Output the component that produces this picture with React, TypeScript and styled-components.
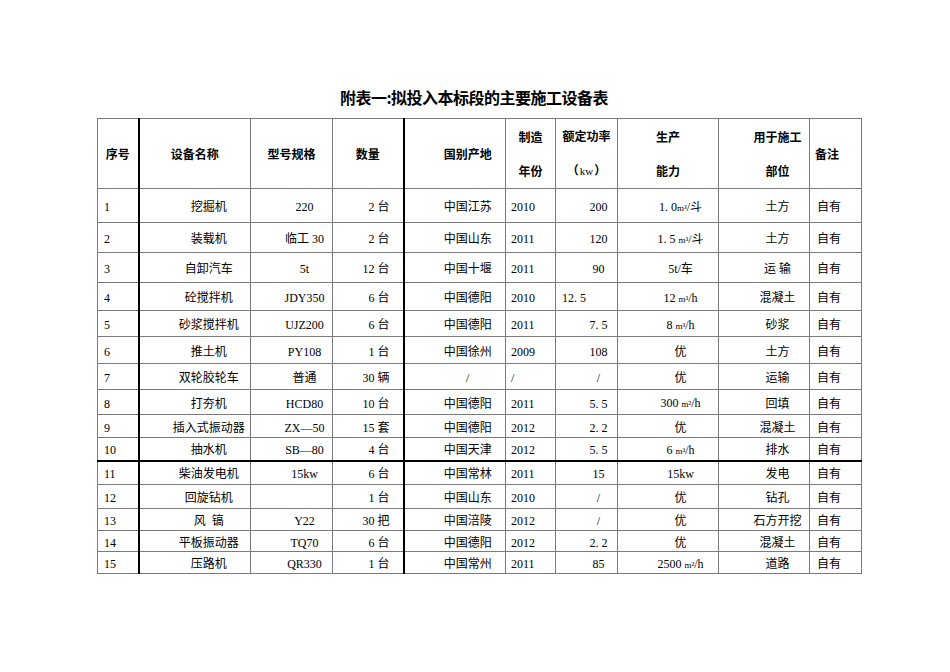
import React from "react";
import styled, { createGlobalStyle } from "styled-components";

const Global = createGlobalStyle`
  html, body { margin: 0; padding: 0; background: #ffffff; }
  body { font-family: "Noto Sans CJK SC", sans-serif; color: #000; }
`;

const Page = styled.main`
  width: 950px;
  height: 672px;
  box-sizing: border-box;
  padding: 86px 0 0 97px;
`;

const Title = styled.h1`
  width: 764px;
  box-sizing: border-box;
  margin: 0 0 10px;
  padding-right: 10px;
  font-family: "Noto Sans CJK SC", sans-serif;
  font-size: 16px;
  letter-spacing: -0.5px;
  line-height: 22px;
  font-weight: 700;
  text-align: center;
`;

const Table = styled.table`
  border-collapse: collapse;
  table-layout: fixed;
  width: 765px;
  font-size: 12px;
`;

const Col = styled.col<{ $w: number }>`
  width: ${(p) => p.$w}px;
`;

const HeadRow = styled.tr`
  height: 70px;
`;

const Row = styled.tr<{ $h: number; $heavy?: boolean }>`
  height: ${(p) => p.$h}px;
  ${(p) => (p.$heavy ? "& > td { border-bottom: 2px solid #000; }" : "")}
`;

type Align = "left" | "center" | "right";

const edge = (col: number) =>
  col === 1 || col === 4 ? "2px solid #000" : col === 8 ? "1px solid #333" : "1px solid #7a7a7a";

const HeadCell = styled.th<{ $col: number; $align: Align; $pl: number; $pr: number }>`
  border: 1px solid #7a7a7a;
  border-left: ${(p) => edge(p.$col)};
  padding: 0 ${(p) => p.$pr}px 0 ${(p) => p.$pl}px;
  text-align: ${(p) => p.$align};
  vertical-align: middle;
  font-family: "Noto Sans CJK SC", sans-serif;
  font-weight: 700;
  font-size: 12px;
  line-height: 16px;
  white-space: nowrap;
`;

const HeadLine = styled.div`
  line-height: 34px;
`;

const Kw = styled.span`
  font-family: "Liberation Serif", serif;
  font-weight: 400;
  font-size: 11px;
  margin: 0 1px;
`;

const Cell = styled.td<{ $col: number; $align: Align; $pl: number; $pr: number }>`
  border: 1px solid #7a7a7a;
  border-left: ${(p) => edge(p.$col)};
  padding: 3px ${(p) => p.$pr}px 0 ${(p) => p.$pl}px;
  text-align: ${(p) => p.$align};
  vertical-align: middle;
  font-family: "Liberation Serif", "Noto Sans CJK SC", serif;
  font-size: 12px;
  line-height: 16px;
  white-space: pre;
  overflow: hidden;
`;

const Unit = styled.span`
  font-size: 9px;
`;

const widths = [41, 112, 82, 71, 102, 50, 62, 101, 91, 52];

const colSpec: { align: Align; pl: number; pr: number }[] = [
  { align: "left", pl: 6, pr: 0 },
  { align: "center", pl: 28, pr: 0 },
  { align: "center", pl: 26, pr: 0 },
  { align: "right", pl: 0, pr: 13 },
  { align: "center", pl: 26, pr: 0 },
  { align: "left", pl: 5, pr: 0 },
  { align: "center", pl: 24, pr: 0 },
  { align: "center", pl: 25, pr: 0 },
  { align: "center", pl: 27, pr: 0 },
  { align: "left", pl: 7, pr: 0 },
];

const headSpec: { align: Align; pl: number; pr: number; lines: React.ReactNode[] }[] = [
  { align: "center", pl: 0, pr: 0, lines: ["序号"] },
  { align: "center", pl: 0, pr: 0, lines: ["设备名称"] },
  { align: "center", pl: 0, pr: 0, lines: ["型号规格"] },
  { align: "center", pl: 0, pr: 0, lines: ["数量"] },
  { align: "center", pl: 26, pr: 0, lines: ["国别产地"] },
  { align: "center", pl: 0, pr: 0, lines: ["制造", "年份"] },
  { align: "center", pl: 0, pr: 0, lines: ["额定功率", <>（<Kw>kw</Kw>）</>] },
  { align: "center", pl: 0, pr: 0, lines: ["生产", "能力"] },
  { align: "center", pl: 27, pr: 0, lines: ["用于施工", "部位"] },
  { align: "left", pl: 5, pr: 0, lines: ["备注"] },
];

const cap = (pre: string, sup: string, post: string) => (
  <>
    {pre}
    <Unit>{sup}</Unit>
    {post}
  </>
);

type RowData = { h: number; heavy?: boolean; cells: React.ReactNode[]; powerLeft?: boolean };

const rows: RowData[] = [
  { h: 34, cells: ["1", "挖掘机", "220", "2 台", "中国江苏", "2010", "200", cap("1. 0", "m³", "/斗"), "土方", "自有"] },
  { h: 30, cells: ["2", "装载机", "临工 30", "2 台", "中国山东", "2011", "120", cap("1. 5 ", "m³", "/斗"), "土方", "自有"] },
  { h: 30, cells: ["3", "自卸汽车", "5t", "12 台", "中国十堰", "2011", "90", "5t/车", "运 输", "自有"] },
  { h: 28, powerLeft: true, cells: ["4", "砼搅拌机", "JDY350", "6 台", "中国德阳", "2010", "12. 5", cap("12 ", "m³", "/h"), "混凝土", "自有"] },
  { h: 26, cells: ["5", "砂浆搅拌机", "UJZ200", "6 台", "中国德阳", "2011", "7. 5", cap("8 ", "m³", "/h"), "砂浆", "自有"] },
  { h: 27, cells: ["6", "推土机", "PY108", "1 台", "中国徐州", "2009", "108", "优", "土方", "自有"] },
  { h: 26, cells: ["7", "双轮胶轮车", "普通", "30 辆", "/", "/", "/", "优", "运输", "自有"] },
  { h: 25, cells: ["8", "打夯机", "HCD80", "10 台", "中国德阳", "2011", "5. 5", cap("300 ", "m²", "/h"), "回填", "自有"] },
  { h: 23, cells: ["9", "插入式振动器", "ZX—50", "15 套", "中国德阳", "2012", "2. 2", "优", "混凝土", "自有"] },
  { h: 23, heavy: true, cells: ["10", "抽水机", "SB—80", "4 台", "中国天津", "2012", "5. 5", cap("6 ", "m³", "/h"), "排水", "自有"] },
  { h: 24, cells: ["11", "柴油发电机", "15kw", "6 台", "中国常林", "2011", "15", "15kw", "发电", "自有"] },
  { h: 24, cells: ["12", "回旋钻机", "", "1 台", "中国山东", "2010", "/", "优", "钻孔", "自有"] },
  { h: 22, cells: ["13", "风  镐", "Y22", "30 把", "中国涪陵", "2012", "/", "优", "石方开挖", "自有"] },
  { h: 21, cells: ["14", "平板振动器", "TQ70", "6 台", "中国德阳", "2012", "2. 2", "优", "混凝土", "自有"] },
  { h: 22, cells: ["15", "压路机", "QR330", "1 台", "中国常州", "2011", "85", cap("2500 ", "m²", "/h"), "道路", "自有"] },
];

export default function App() {
  return (
    <>
      <Global />
      <Page>
        <Title>附表一:拟投入本标段的主要施工设备表</Title>
        <Table>
          <colgroup>
            {widths.map((w, i) => (
              <Col key={i} $w={w} />
            ))}
          </colgroup>
          <thead>
            <HeadRow>
              {headSpec.map((h, i) => (
                <HeadCell key={i} $col={i} $align={h.align} $pl={h.pl} $pr={h.pr}>
                  {h.lines.length > 1
                    ? h.lines.map((l, j) => <HeadLine key={j}>{l}</HeadLine>)
                    : h.lines[0]}
                </HeadCell>
              ))}
            </HeadRow>
          </thead>
          <tbody>
            {rows.map((r, ri) => (
              <Row key={ri} $h={r.h} $heavy={r.heavy}>
                {r.cells.map((c, ci) => {
                  const spec =
                    ci === 6 && r.powerLeft ? { align: "left" as Align, pl: 6, pr: 0 } : colSpec[ci];
                  return (
                    <Cell key={ci} $col={ci} $align={spec.align} $pl={spec.pl} $pr={spec.pr}>
                      {c}
                    </Cell>
                  );
                })}
              </Row>
            ))}
          </tbody>
        </Table>
      </Page>
    </>
  );
}
